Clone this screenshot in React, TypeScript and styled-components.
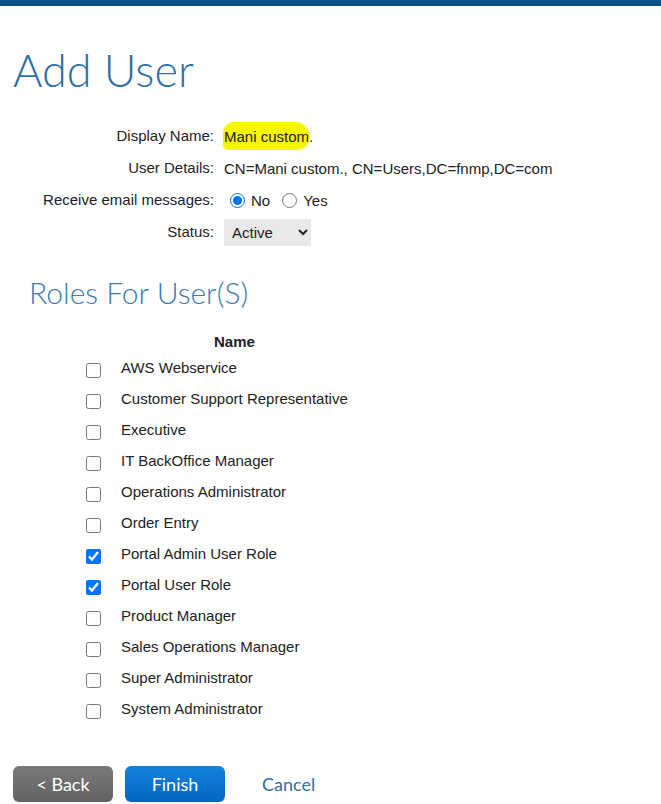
import styled, { createGlobalStyle } from "styled-components";

const GlobalStyle = createGlobalStyle`
  html, body { margin: 0; padding: 0; background: #fff; }
  body { font-family: "Liberation Sans", Arial, sans-serif; color: #222; }
`;

const TopBar = styled.div`
  height: 6px;
  background: linear-gradient(#0b5290, #07487e);
`;

const Page = styled.div`
  padding: 0 13px;
`;

const Title = styled.h1`
  margin: 36px 0 0;
  font-family: Lato, "Open Sans", sans-serif;
  font-weight: 300;
  font-size: 45px;
  line-height: 56px;
  color: #2d6fa6;
`;

const Form = styled.div`
  display: grid;
  grid-template-columns: 201px 1fr;
  column-gap: 10px;
  margin-top: 22px;
  font-size: 15px;
`;

const Label = styled.div`
  text-align: right;
  height: 32px;
  line-height: 32px;
`;

const Value = styled.div`
  height: 32px;
  display: flex;
  align-items: center;
  gap: 4px;
`;

const Marked = styled.span`
  background: #f6f600;
  border-radius: 10px 14px 12px 4px;
  padding: 5px 0 4px;
  box-shadow: 0 0 0 1px #f6f600;
`;

const RadioLabel = styled.label`
  display: inline-flex;
  align-items: center;
  gap: 6px;
  margin-right: 2px;
  input { margin: 0 0 0 6px; width: 15px; height: 15px; }
`;

const Select = styled.select`
  height: 27px;
  width: 87px;
  border: none;
  background: #e9e9e9;
  font: inherit;
  font-size: 15px;
  padding: 0 4px;
  color: #222;
`;

const SubTitle = styled.h2`
  margin: 26px 0 0 16px;
  font-family: Lato, "Open Sans", sans-serif;
  font-weight: 300;
  font-size: 30px;
  line-height: 36px;
  color: #3a7bb2;
`;

const Roles = styled.div`
  display: grid;
  grid-template-columns: 108px max-content;
  margin-top: 20px;
  font-size: 15px;
`;

const Head = styled.div`
  grid-column: 2;
  text-align: center;
  font-weight: bold;
  height: 24px;
  line-height: 24px;
`;

const Check = styled.div`
  height: 31px;
  display: flex;
  align-items: center;
  padding-left: 72px;
  input { margin: 2px 0 0 1px; width: 15px; height: 15px; }
`;

const RoleName = styled.div`
  height: 31px;
  line-height: 28px;
`;

const Actions = styled.div`
  display: flex;
  align-items: center;
  gap: 12px;
  margin-top: 40px;
`;

const Button = styled.button<{ $kind: "back" | "primary" }>`
  width: 100px;
  height: 36px;
  border: none;
  border-radius: 6px;
  color: #fff;
  font-family: Lato, "Open Sans", sans-serif;
  font-size: 18px;
  background: ${(p) =>
    p.$kind === "back"
      ? "linear-gradient(#7a7a7a, #626262)"
      : "linear-gradient(#1283dc, #0565c0)"};
`;

const Cancel = styled.a`
  margin-left: 25px;
  font-family: Lato, "Open Sans", sans-serif;
  font-size: 18px;
  color: #2d6fa6;
  text-decoration: none;
`;

const roles = [
  ["AWS Webservice", false],
  ["Customer Support Representative", false],
  ["Executive", false],
  ["IT BackOffice Manager", false],
  ["Operations Administrator", false],
  ["Order Entry", false],
  ["Portal Admin User Role", true],
  ["Portal User Role", true],
  ["Product Manager", false],
  ["Sales Operations Manager", false],
  ["Super Administrator", false],
  ["System Administrator", false],
] as const;

const App = () => {
  return (
    <>
      <GlobalStyle />
      <TopBar />
      <Page>
        <Title>Add User</Title>
        <Form>
          <Label>Display Name:</Label>
          <Value>
            <span>
              <Marked>Mani custom</Marked>.
            </span>
          </Value>
          <Label>User Details:</Label>
          <Value>CN=Mani custom., CN=Users,DC=fnmp,DC=com</Value>
          <Label>Receive email messages:</Label>
          <Value>
            <RadioLabel>
              <input type="radio" name="email" defaultChecked />No
            </RadioLabel>
            <RadioLabel>
              <input type="radio" name="email" />Yes
            </RadioLabel>
          </Value>
          <Label>Status:</Label>
          <Value>
            <Select defaultValue="Active">
              <option>Active</option>
              <option>Inactive</option>
            </Select>
          </Value>
        </Form>
        <SubTitle>Roles For User(S)</SubTitle>
        <Roles>
          <Head>Name</Head>
          {roles.map(([name, checked], n) => (
            <>
              <Check key={"c" + n}>
                <input type="checkbox" defaultChecked={checked} />
              </Check>
              <RoleName key={"n" + n}>{name}</RoleName>
            </>
          ))}
        </Roles>
        <Actions>
          <Button $kind="back">&lt; Back</Button>
          <Button $kind="primary">Finish</Button>
          <Cancel href="#">Cancel</Cancel>
        </Actions>
      </Page>
    </>
  );
};

export default App;
